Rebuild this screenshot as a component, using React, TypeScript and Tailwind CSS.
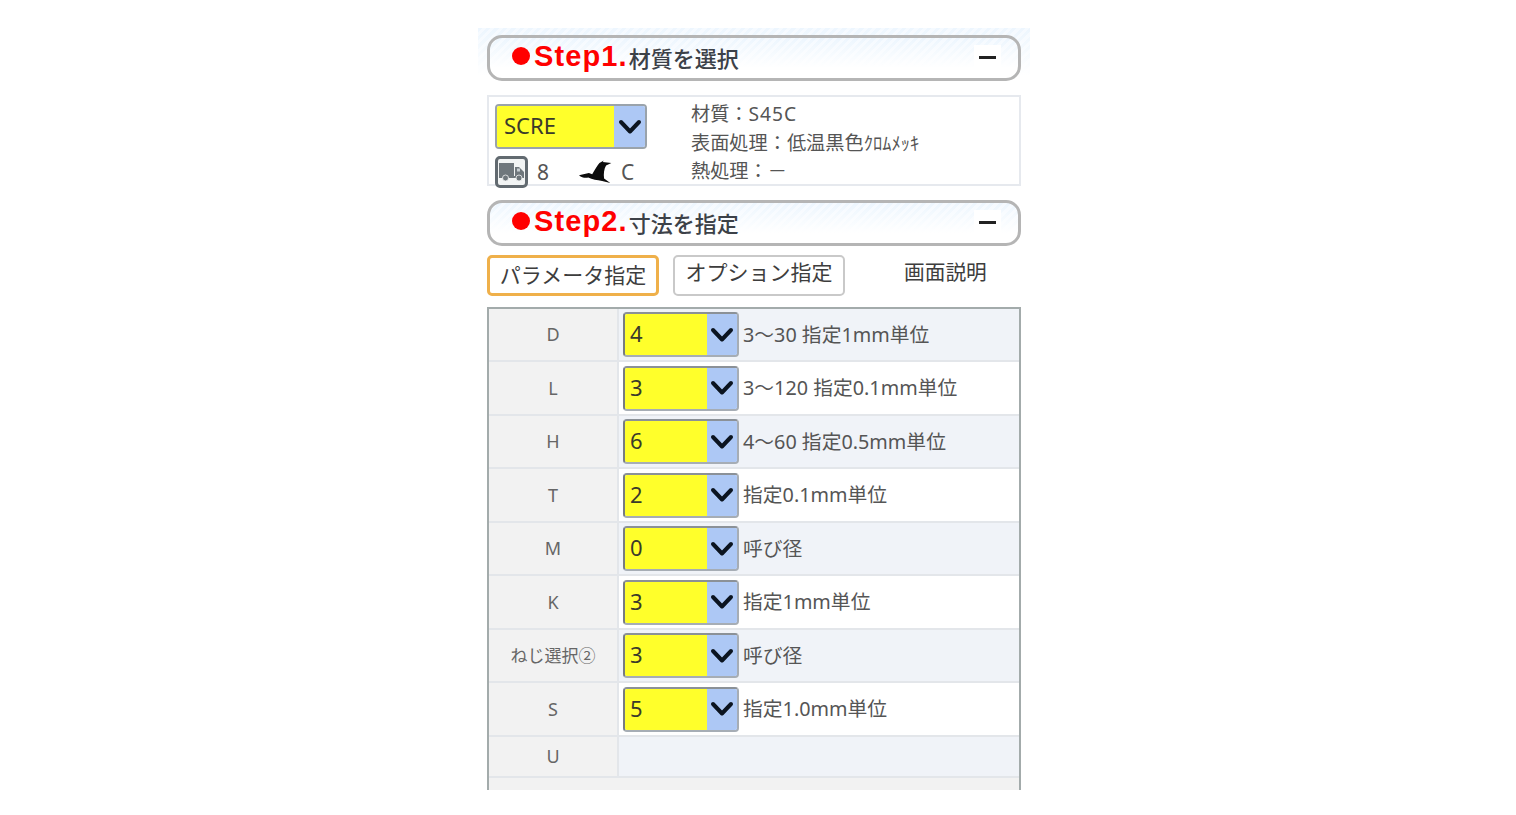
const FONT = "font-['Noto_Sans','Noto_Sans_CJK_JP',sans-serif]";

function Chevron({ className }: { className: string }) {
  return (
    <svg viewBox="0 0 24 16" className={className} fill="none" stroke="#0b1420" strokeWidth="4" strokeLinecap="round" strokeLinejoin="round">
      <path d="M3 3 L12 12.5 L21 3" />
    </svg>
  );
}

function Select({ value, big }: { value: string; big?: boolean }) {
  return (
    <div className={big ? "flex h-[45px] w-[152px] overflow-hidden rounded-[4px] border-2 border-[#9aa3ab]" : "flex h-[45px] w-[116px] overflow-hidden rounded-[4px] border-2 border-t-[#8b9197] border-l-[#777c80] border-r-[#a6adb5] border-b-[#a6adb5]"}>
      <div className={big ? "flex flex-1 items-center bg-[#ffff2b] pl-[7px] pb-[2px] text-[22px] text-[#3a3a2a]" : "flex flex-1 items-center bg-[#ffff2b] pl-[5px] pb-[2px] text-[22px] text-[#3a3a2a]"}>
        {value}
      </div>
      <div className={big ? "flex w-[31px] items-center justify-center bg-[#adc8f5]" : "flex w-[30px] items-center justify-center bg-[#adc8f5]"}>
        <Chevron className="h-[16px] w-[24px]" />
      </div>
    </div>
  );
}

function StepHeader({ step, title }: { step: string; title: string }) {
  return (
    <div className="flex h-[46px] items-center rounded-[15px] border-[3px] border-[#b5b5b5] bg-[linear-gradient(to_bottom,transparent,white_75%),repeating-linear-gradient(135deg,#edf6fe_0_3px,#f5faff_3px_6px)] pl-[22px] pr-[17px]">
      <span className="mb-[4px] h-[18px] w-[18px] rounded-full bg-[#ff0000]" />
      <span className="mb-[4px] ml-[4px] font-['Liberation_Sans',sans-serif] text-[29px] font-bold leading-none tracking-[1.1px] text-[#ff0000]">{step}</span>
      <span className="mb-[1px] ml-[1px] text-[22px] font-medium leading-none text-[#3c4148]">{title}</span>
      <span className="ml-auto mt-[7px] flex h-[24px] items-center self-start bg-white px-[5px]">
        <span className="h-[3px] w-[17px] bg-[#222]" />
      </span>
    </div>
  );
}

function Truck() {
  return (
    <div className="flex h-[32px] w-[33px] items-center justify-center rounded-[5px] border-[3px] border-[#626a70] bg-[#f2f4f4]">
      <svg viewBox="0 0 25 18" className="h-[18px] w-[25px]" fill="#6f777c">
        <rect x="0" y="0" width="15" height="13" />
        <path d="M16 4 h4 l5 5 v6 h-9 z" />
        <rect x="18" y="5.5" width="3" height="3" fill="#c9d0d3" />
        <rect x="0" y="13" width="16" height="2" />
        <circle cx="6.5" cy="15" r="3" stroke="#f2f4f4" strokeWidth="0.8" />
        <circle cx="20" cy="15" r="3" stroke="#f2f4f4" strokeWidth="0.8" />
      </svg>
    </div>
  );
}

function Bird() {
  return (
    <svg viewBox="0 0 100 70" className="h-[24px] w-[33px]" fill="#0c0c0c">
      <path d="M0 45 L30 38 L40 42 C48 30 55 15 62 8 L75 0 L72 5 L98 8 L82 15 C76 25 74 40 76 55 L95 68 L70 62 C55 60 40 58 28 52 C18 54 8 52 0 45 Z" />
    </svg>
  );
}

const rows: { label: string; value?: string; note?: string; small?: boolean; h: string }[] = [
  { label: "D", value: "4", note: "3～30 指定1mm単位", h: "h-[53px]" },
  { label: "L", value: "3", note: "3～120 指定0.1mm単位", h: "h-[54px]" },
  { label: "H", value: "6", note: "4～60 指定0.5mm単位", h: "h-[53px]" },
  { label: "T", value: "2", note: "指定0.1mm単位", h: "h-[54px]" },
  { label: "M", value: "0", note: "呼び径", h: "h-[53px]" },
  { label: "K", value: "3", note: "指定1mm単位", h: "h-[54px]" },
  { label: "ねじ選択②", value: "3", note: "呼び径", small: true, h: "h-[53px]" },
  { label: "S", value: "5", note: "指定1.0mm単位", h: "h-[54px]" },
  { label: "U", h: "h-[41px]" },
];

export default function App() {
  return (
    <div className={`${FONT} h-[815px] w-[1516px] overflow-hidden bg-white`}>
      <div className="ml-[478px] mt-[28px] w-[552px]">
        <div className="bg-[linear-gradient(to_bottom,transparent,white_90%),repeating-linear-gradient(135deg,#edf6fe_0_3px,#f5faff_3px_6px)] px-[9px] pt-[7px]">
          <StepHeader step="Step1." title="材質を選択" />
        </div>
        <div className="mx-[9px] mt-[14px] flex h-[91px] border-2 border-[#e6e9ee] pl-[6px] pt-[7px]">
          <div className="w-[196px]">
            <Select value="SCRE" big />
            <div className="mt-[7px] flex items-center text-[21px] leading-none text-[#555]">
              <Truck />
              <span className="ml-[9px]">8</span>
              <span className="ml-[30px]"><Bird /></span>
              <span className="ml-[9px]">C</span>
            </div>
          </div>
          <div className="-mt-[4px] text-[19.2px] leading-[28.5px] text-[#555]">
            <div>材質：<span className="tracking-[1px]">S45C</span></div>
            <div className="whitespace-nowrap">表面処理：低温黒色<span className="text-[18.5px]">ｸﾛﾑﾒｯｷ</span></div>
            <div>熱処理：－</div>
          </div>
        </div>
        <div className="mx-[9px] mt-[14px]">
          <StepHeader step="Step2." title="寸法を指定" />
          <div className="mt-[9px] flex items-center">
            <div className="flex h-[41px] w-[172px] items-center justify-center rounded-[5px] border-[3px] border-[#efb04a] bg-white text-[21px] text-[#3d3d3d]">パラメータ指定</div>
            <div className="ml-[14px] flex h-[41px] w-[172px] items-center justify-center rounded-[5px] border-2 border-[#c9c9c9] pb-[5px] text-[21px] text-[#3d3d3d]">オプション指定</div>
            <div className="ml-[59px] pb-[6px] text-[20.7px] text-[#3d3d3d]">画面説明</div>
          </div>
          <div className="mt-[11px] h-[483px] w-[534px] overflow-hidden border-x-2 border-t-2 border-x-[#a3abab] border-t-[#a3abab]">
            {rows.map((r, i) => (
              <div key={i} className={`flex ${r.h} border-b-2 border-[#e3e6ea]`}>
                <div className={r.small ? "flex w-[130px] shrink-0 items-center justify-center border-r-2 border-[#e3e6ea] bg-[#f2f2f2] text-[17px] text-[#666]" : "flex w-[130px] shrink-0 items-center justify-center border-r-2 border-[#e3e6ea] bg-[#f2f2f2] text-[18px] text-[#666]"}>
                  {r.label}
                </div>
                <div className={i % 2 === 0 ? "flex flex-1 items-center bg-[#f0f3f8] pl-[4px]" : "flex flex-1 items-center bg-white pl-[4px]"}>
                  {r.value && <Select value={r.value} />}
                  {r.note && <span className="ml-[4px] whitespace-nowrap text-[19.8px] text-[#555]">{r.note}</span>}
                </div>
              </div>
            ))}
            <div className="h-[20px] bg-[#f2f2f2]" />
          </div>
        </div>
      </div>
    </div>
  );
}
